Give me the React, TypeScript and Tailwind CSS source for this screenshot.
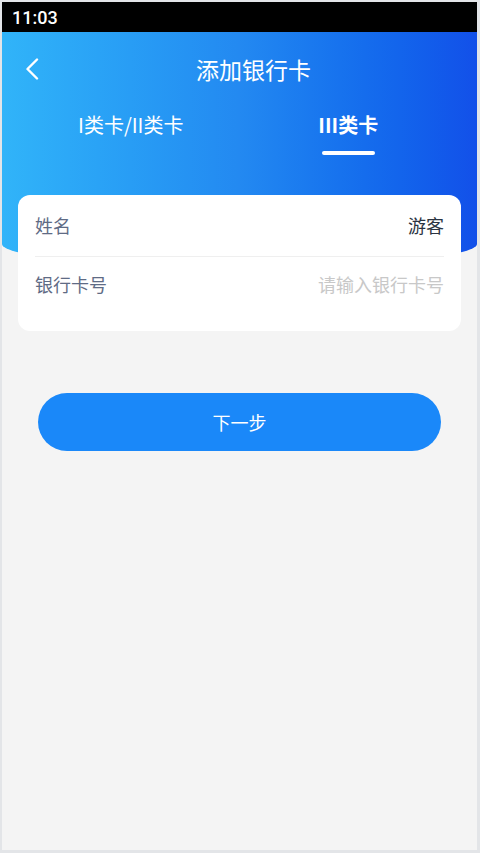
import { useState } from "react";

const cjk = { fontFamily: '"Noto Sans CJK SC", "Noto Sans", sans-serif' };

export default function App() {
  const [tab, setTab] = useState(1);
  const [cardNo, setCardNo] = useState("");

  return (
    <div
      className="w-full h-[853px] flex flex-col overflow-hidden bg-[#f4f4f4] border-[#e3e5e8] border-t-2 border-l-2 border-r-[3px] border-b-[3px]"
      style={cjk}
    >
      {/* Status bar */}
      <div className="h-[30px] shrink-0 bg-black flex items-center px-[10px]">
        <span className="text-white text-[18px] font-medium" style={{ fontFamily: "Roboto, sans-serif" }}>
          11:03
        </span>
      </div>

      {/* Header */}
      <div className="h-[235px] shrink-0 bg-linear-to-r from-[#31b4f9] via-[#2389f1] to-[#1350e9] rounded-b-[50%_23px] pt-[14px]">
        <div className="h-[46px] flex items-center relative">
          <button className="absolute left-[19px] top-[8px] p-1">
            <svg width="14" height="22" viewBox="0 0 14 22" fill="none">
              <path d="M12 1.5 2.5 11 12 20.5" stroke="white" strokeWidth="2.4" strokeLinecap="round" strokeLinejoin="round" />
            </svg>
          </button>
          <h1 className="flex-1 text-center text-white text-[23px] pl-[28px]">添加银行卡</h1>
        </div>

        {/* Tabs */}
        <div className="flex px-5 mt-[19px]">
          {["I类卡/II类卡", "III类卡"].map((label, i) => (
            <button key={label} onClick={() => setTab(i)} className="flex-1 flex flex-col items-center">
              <span className={`text-white text-[20px] leading-[28px] ${tab === i ? "font-bold" : ""}`}>{label}</span>
              <span className={`mt-[12px] h-[4px] w-[53px] rounded-full ${tab === i ? "bg-white" : "bg-transparent"}`} />
            </button>
          ))}
        </div>
      </div>

      {/* Form card */}
      <div className="relative mx-4 -mt-[72px] bg-white rounded-xl px-[17px] pb-[20px]">
        <div className="h-[61px] flex items-center justify-between">
          <span className="text-[18px] text-[#5f6b85]">姓名</span>
          <span className="text-[18px] text-[#2b3442]">游客</span>
        </div>
        <div className="h-px bg-[#efefef]" />
        <div className="h-[54px] flex items-center justify-between">
          <span className="text-[18px] text-[#5f6b85] shrink-0">银行卡号</span>
          <input
            value={cardNo}
            onChange={(e) => setCardNo(e.target.value)}
            placeholder="请输入银行卡号"
            className="flex-1 min-w-0 text-right text-[18px] text-[#2b3442] placeholder:text-[#c8c8c8] outline-none bg-transparent"
          />
        </div>
      </div>

      {/* Next button */}
      <button className="mx-9 mt-[62px] h-[58px] rounded-full bg-[#1a88f9] text-white text-[18px]">下一步</button>
    </div>
  );
}
